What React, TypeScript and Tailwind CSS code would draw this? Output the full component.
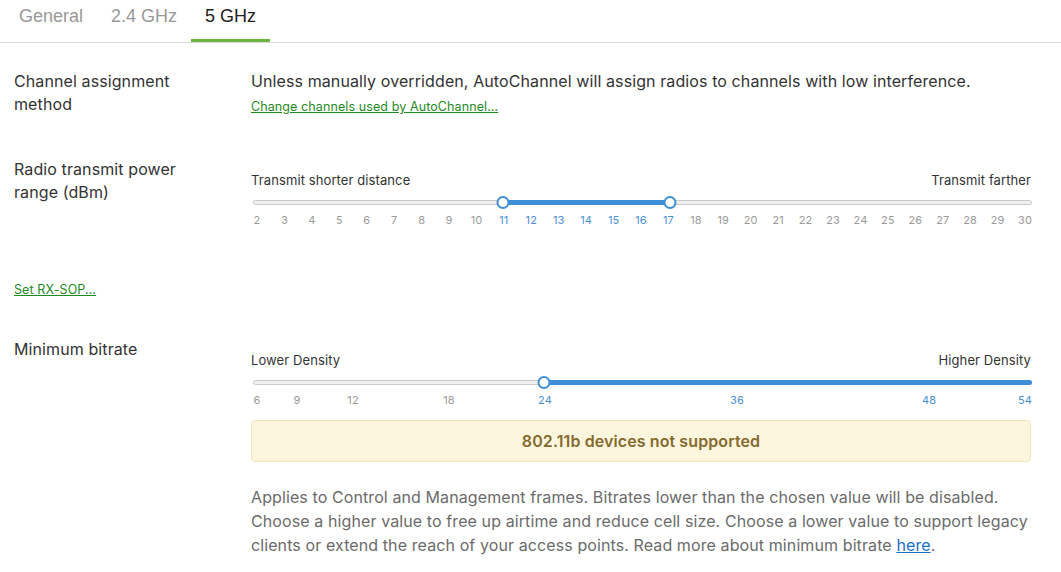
import React from 'react';

const tabs = ['General', '2.4 GHz', '5 GHz'];

type Tick = { label: string; x: number };

function Slider({
  left,
  right,
  ticks,
  from,
  to,
  handles,
}: {
  left: string;
  right: string;
  ticks: Tick[];
  from: number;
  to: number;
  handles: number[];
}) {
  return (
    <div>
      <div className="flex justify-between text-[13px] leading-[18px] text-[#333]">
        <span>{left}</span>
        <span>{right}</span>
      </div>
      <div className="relative mt-[7px] h-[14px]">
        <div className="absolute left-[2px] right-[-1px] top-[4px] h-[5px] rounded-full border border-[#c8c8c8] bg-[#f0f0f0]" />
        <div
          className="absolute top-[4px] h-[5px] rounded-full bg-[#3e8ed8]"
          style={{ left: from, width: to - from }}
        />
        {handles.map((h) => (
          <div
            key={h}
            className="absolute top-0 h-[13px] w-[13px] -translate-x-1/2 rounded-full border-2 border-[#3e8ed8] bg-white"
            style={{ left: h }}
          />
        ))}
      </div>
      <div className="relative mt-[3px] h-[14px] text-[11px] leading-[14px]">
        {ticks.map((t) => {
          const on = t.x >= from - 2 && t.x <= to + 2;
          return (
            <span
              key={t.label}
              className={`absolute -translate-x-1/2 ${on ? 'text-[#4a90d6]' : 'text-[#9a9a9a]'}`}
              style={{ left: t.x }}
            >
              {t.label}
            </span>
          );
        })}
      </div>
    </div>
  );
}

export default function App() {
  const powerTicks: Tick[] = Array.from({ length: 29 }, (_, i) => ({
    label: String(i + 2),
    x: 6 + i * 27.43,
  }));
  const rateTicks: Tick[] = [
    { label: '6', x: 6 },
    { label: '9', x: 46 },
    { label: '12', x: 102 },
    { label: '18', x: 198 },
    { label: '24', x: 294 },
    { label: '36', x: 486 },
    { label: '48', x: 678 },
    { label: '54', x: 774 },
  ];

  return (
    <div className="min-h-screen w-[1061px] bg-white font-['Inter',sans-serif] text-[#333]">
      <div className="flex h-[43px] border-b border-[#dcdcdc] pl-[5px] font-['Liberation_Sans',Arial,sans-serif] text-[18px]">
        {tabs.map((t) => (
          <div
            key={t}
            className={`flex h-[42px] items-center border-b-[3px] px-[14px] pb-[6px] ${
              t === '5 GHz' ? 'border-[#6cb33f] text-[#222]' : 'border-transparent text-[#999]'
            }`}
          >
            {t}
          </div>
        ))}
      </div>

      <div className="pl-[14px] pr-[30px] tracking-[0.1px]">
        <div className="flex pt-[27px]">
          <div className="w-[237px] pr-12 text-[16px] leading-[23px]">Channel assignment method</div>
          <div className="flex-1">
            <p className="text-[16px] leading-[23px]">
              Unless manually overridden, AutoChannel will assign radios to channels with low interference.
            </p>
            <a href="#" className="text-[12.5px] leading-[18px] text-[#1f8a1f] underline">
              Change channels used by AutoChannel...
            </a>
          </div>
        </div>

        <div className="mt-[41px] flex">
          <div className="w-[237px] pr-12 text-[16px] leading-[23px]">Radio transmit power range (dBm)</div>
          <div className="flex-1 pt-[13px]">
            <Slider
              left="Transmit shorter distance"
              right="Transmit farther"
              ticks={powerTicks}
              from={252}
              to={419}
              handles={[252, 419]}
            />
          </div>
        </div>

        <div className="mt-[49px]">
          <a href="#" className="text-[12.5px] leading-[18px] text-[#1f8a1f] underline">
            Set RX-SOP...
          </a>
        </div>

        <div className="mt-[38px] flex">
          <div className="w-[237px] pr-12 text-[16px] leading-[23px]">Minimum bitrate</div>
          <div className="flex-1 pt-[13px]">
            <Slider
              left="Lower Density"
              right="Higher Density"
              ticks={rateTicks}
              from={293}
              to={781}
              handles={[293]}
            />
            <div className="mt-[13px] flex h-[42px] items-center justify-center rounded border border-[#f3e6bd] bg-[#fdf6df] text-[16px] font-semibold text-[#856a2e]">
              802.11b devices not supported
            </div>
            <p className="mt-[23px] text-[16px] leading-[24px] text-[#6b6b6b]">
              Applies to Control and Management frames. Bitrates lower than the chosen value will be disabled.
              Choose a higher value to free up airtime and reduce cell size. Choose a lower value to support legacy
              clients or extend the reach of your access points. Read more about minimum bitrate{' '}
              <a href="#" className="text-[#1a6fc9] underline">
                here
              </a>
              .
            </p>
          </div>
        </div>
      </div>
    </div>
  );
}
